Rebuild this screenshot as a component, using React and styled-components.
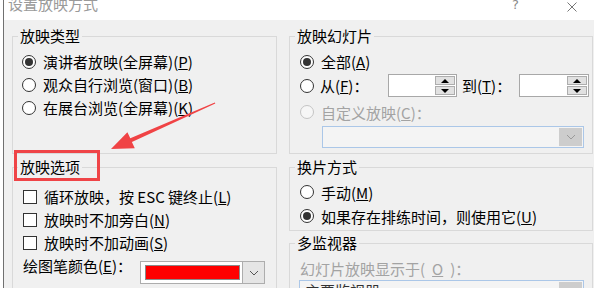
import React from "react";
import styled, { createGlobalStyle } from "styled-components";

// ===== Global =====
const GlobalStyle = createGlobalStyle`
  html, body { margin: 0; padding: 0; background: #fff; }
  body { font-family: "Noto Sans CJK SC", "Noto Sans", sans-serif; }
`;

// ===== Window frame =====
const Screen = styled.div`
  position: relative;
  width: 594px;
  height: 288px;
  overflow: hidden;
  background: #fff;
`;

const Window = styled.div`
  margin-left: 3px;
  height: 100%;
  border-left: 1px solid #707070;
  display: flex;
  flex-direction: column;
`;

const TitleBar = styled.div`
  flex: none;
  height: 20px;
  display: flex;
  align-items: flex-start;
  padding-left: 4px;
  overflow: hidden;
  background: #fff;
`;

const Title = styled.div`
  flex: 1;
  font-size: 15px;
  line-height: 15px;
  margin-top: -4px;
  color: #9a9a9a;
`;

const HelpMark = styled.span`
  font-family: "DejaVu Sans", sans-serif;
  font-size: 13px;
  line-height: 13px;
  margin-top: -2px;
  margin-right: 48px;
  color: #8a8a8a;
`;

const CloseIcon = styled.svg`
  margin-top: 2px;
  margin-right: 17px;
`;

const Body = styled.div`
  flex: 1;
  background: #f0f0f0;
  padding: 6px 0 0 8px;
  display: grid;
  grid-template-columns: 265px 304px;
  column-gap: 12px;
  row-gap: 3px;
  align-content: start;
`;

const Stack = styled.div`
  display: flex;
  flex-direction: column;
  gap: 2px;
`;

// ===== Group boxes =====
const Group = styled.fieldset`
  margin: 0;
  padding: 0;
  min-width: 0;
  box-sizing: border-box;
  border: 1px solid #d9d9d9;
`;

const Legend = styled.legend`
  position: relative;
  margin-left: 5px;
  padding: 0 2px;
  font-size: 15px;
  line-height: 20px;
  color: #000;
`;

const Highlight = styled.span`
  position: absolute;
  left: -4px;
  top: -7px;
  width: 86px;
  height: 31px;
  box-sizing: border-box;
  border: 3px solid #ef4447;
`;

const GroupBody = styled.div`
  padding: ${({ $pad }) => $pad};
`;

// ===== Controls =====
const Row = styled.div`
  display: flex;
  align-items: center;
  gap: ${({ $gap }) => ($gap ?? 7)}px;
  height: ${({ $h }) => $h || 23}px;
  font-size: 15px;
  color: ${({ $disabled }) => ($disabled ? "#a3a3a3" : "#000")};
  white-space: nowrap;
`;

const RadioMark = styled.span`
  flex: none;
  width: 14px;
  height: 14px;
  box-sizing: border-box;
  border-radius: 50%;
  border: 1px solid ${({ $disabled }) => ($disabled ? "#c4c4c4" : "#333")};
  background: ${({ $disabled }) => ($disabled ? "#f6f6f6" : "#fff")};
  display: flex;
  align-items: center;
  justify-content: center;

  &::after {
    content: "";
    display: ${({ $checked }) => ($checked ? "block" : "none")};
    width: 8px;
    height: 8px;
    border-radius: 50%;
    background: #333;
  }
`;

const CheckMark = styled.span`
  flex: none;
  width: 14px;
  height: 14px;
  margin-left: 1px;
  box-sizing: border-box;
  border: 1px solid #333;
  background: #fff;
`;

const FixedLabel = styled.span`
  width: ${({ $w }) => $w}px;
  flex: none;
`;

const SpinBox = styled.div`
  flex: none;
  width: ${({ $w }) => $w}px;
  height: 23px;
  box-sizing: border-box;
  border: 1px solid #a8a8a8;
  background: #fff;
  padding: 1px;
  display: flex;
  justify-content: flex-end;
`;

const SpinButtons = styled.div`
  width: 20px;
  display: flex;
  flex-direction: column;
  gap: 1px;
`;

const SpinButton = styled.div`
  flex: 1;
  background: #e1e1e1;
  border: 1px solid #adadad;
  display: flex;
  align-items: center;
  justify-content: center;

  &::after {
    content: "";
    border-left: 4px solid transparent;
    border-right: 4px solid transparent;
    ${({ $down }) =>
      $down ? "border-top: 4px solid #000;" : "border-bottom: 4px solid #000;"}
  }
`;

const Combo = styled.div`
  height: 22px;
  box-sizing: border-box;
  margin-left: ${({ $indent }) => $indent}px;
  margin-right: 8px;
  border: 1px solid #abc7e8;
  background: #f4f4f4;
  display: flex;
  padding: 1px;
`;

const ComboText = styled.span`
  flex: 1;
  font-size: 15px;
  line-height: 18px;
  padding-left: 4px;
  color: #333;
  overflow: hidden;
`;

const ComboButton = styled.div`
  width: 23px;
  background: #cdcdcd;
  display: flex;
  align-items: center;
  justify-content: center;
`;

const ColorRow = styled.div`
  display: flex;
  align-items: flex-start;
  margin-top: 7px;
  font-size: 15px;
`;

const ColorLabel = styled.span`
  width: 117px;
  flex: none;
  margin-top: -5px;
  line-height: 20px;
  margin-left: 1px;
`;

const Picker = styled.div`
  width: 125px;
  height: 23px;
  box-sizing: border-box;
  border: 1px solid #adadad;
  background: #fff;
  display: flex;
`;

const Swatch = styled.div`
  flex: 1;
  margin: 3px 2px 3px 4px;
  background: #ff0000;
  border: 1px solid #8a8a8a;
`;

const PickerButton = styled.div`
  width: 21px;
  background: #e5e5e5;
  border-left: 1px solid #adadad;
  display: flex;
  align-items: center;
  justify-content: center;
`;

const Overlay = styled.svg`
  position: absolute;
  inset: 0;
  pointer-events: none;
`;

// ===== Small pieces =====
const Chevron = ({ color }) => (
  <svg width="10" height="6" viewBox="0 0 10 6">
    <path d="M1 1 L5 5 L9 1" fill="none" stroke={color} strokeWidth="1" />
  </svg>
);

const Radio = ({ checked, disabled, children, h }) => (
  <Row $disabled={disabled} $h={h}>
    <RadioMark $checked={checked} $disabled={disabled} />
    <span>{children}</span>
  </Row>
);

const Check = ({ children }) => (
  <Row>
    <CheckMark />
    <span>{children}</span>
  </Row>
);

const Spin = ({ w }) => (
  <SpinBox $w={w}>
    <SpinButtons>
      <SpinButton />
      <SpinButton $down />
    </SpinButtons>
  </SpinBox>
);

export default function App() {
  return (
    <Screen>
      <GlobalStyle />
      <Window>
        <TitleBar>
          <Title>设置放映方式</Title>
          <HelpMark>?</HelpMark>
          <CloseIcon width="10" height="10" viewBox="0 0 10 10">
            <path d="M0.5 0.5 L9.5 9.5 M9.5 0.5 L0.5 9.5" stroke="#777" strokeWidth="1" />
          </CloseIcon>
        </TitleBar>

        <Body>
          <Group>
            <Legend>放映类型</Legend>
            <GroupBody $pad="4px 8px 5px 9px">
              <Radio checked>演讲者放映(全屏幕)(<u>P</u>)</Radio>
              <Radio>观众自行浏览(窗口)(<u>B</u>)</Radio>
              <Radio>在展台浏览(全屏幕)(<u>K</u>)</Radio>
            </GroupBody>
          </Group>

          <Group>
            <Legend>放映幻灯片</Legend>
            <GroupBody $pad="4px 0 5px 10px">
              <Radio checked>全部(<u>A</u>)</Radio>
              <Row $h={25} $gap={6}>
                <RadioMark />
                <FixedLabel $w={62}>从(<u>F</u>)：</FixedLabel>
                <Spin w={69} />
                <FixedLabel $w={51} style={{ marginLeft: -1 }}>到(<u>T</u>)：</FixedLabel>
                <Spin w={70} />
              </Row>
              <Radio disabled h={28}>自定义放映(<u>C</u>)：</Radio>
              <Combo $indent={22}>
                <ComboText />
                <ComboButton>
                  <Chevron color="#9a9a9a" />
                </ComboButton>
              </Combo>
            </GroupBody>
          </Group>

          <Group>
            <Legend>
              放映选项
              <Highlight />
            </Legend>
            <GroupBody $pad="8px 8px 8px 9px">
              <Check>循环放映，按 ESC 键终止(<u>L</u>)</Check>
              <Check>放映时不加旁白(<u>N</u>)</Check>
              <Check>放映时不加动画(<u>S</u>)</Check>
              <ColorRow>
                <ColorLabel>绘图笔颜色(<u>E</u>)：</ColorLabel>
                <Picker>
                  <Swatch />
                  <PickerButton>
                    <Chevron color="#555" />
                  </PickerButton>
                </Picker>
              </ColorRow>
            </GroupBody>
          </Group>

          <Stack>
            <Group>
              <Legend>换片方式</Legend>
              <GroupBody $pad="3px 0 2px 10px">
                <Radio h={24}>手动(<u>M</u>)</Radio>
                <Radio checked h={24}>如果存在排练时间，则使用它(<u>U</u>)</Radio>
              </GroupBody>
            </Group>
            <Group>
              <Legend>多监视器</Legend>
              <GroupBody $pad="3px 0 6px 10px">
                <Row $disabled $h={24}>幻灯片放映显示于(<u>O</u>)：</Row>
                <Combo $indent={-1}>
                  <ComboText>主要监视器</ComboText>
                  <ComboButton>
                    <Chevron color="#9a9a9a" />
                  </ComboButton>
                </Combo>
              </GroupBody>
            </Group>
          </Stack>
        </Body>
      </Window>

      <Overlay width="594" height="288" viewBox="0 0 594 288">
        <polygon
          points="214.8,102.6 130.3,138.3 127.4,132.2 111,149 134.8,148.2 131.9,141.9 215.3,103.6"
          fill="#f04345"
        />
      </Overlay>
    </Screen>
  );
}
